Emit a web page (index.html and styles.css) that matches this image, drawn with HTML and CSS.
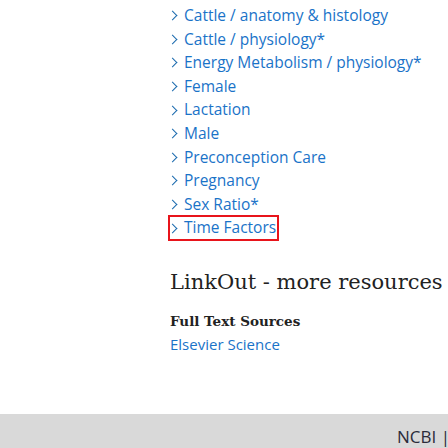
FILE: index.html
```html
<!DOCTYPE html>
<html>
<head>
<meta charset="utf-8">
<link rel="stylesheet" href="styles.css">
</head>
<body>
<div class="page">
  <div class="content">
    <ul class="terms">
      <li><a href="#">Cattle / anatomy &amp; histology</a></li>
      <li><a href="#">Cattle / physiology*</a></li>
      <li><a href="#">Energy Metabolism / physiology*</a></li>
      <li><a href="#">Female</a></li>
      <li><a href="#">Lactation</a></li>
      <li><a href="#">Male</a></li>
      <li><a href="#">Preconception Care</a></li>
      <li><a href="#">Pregnancy</a></li>
      <li><a href="#">Sex Ratio*</a></li>
      <li class="focused"><a href="#">Time Factors</a></li>
    </ul>
    <h2 class="linkout">LinkOut - more resources</h2>
    <h3 class="sub">Full Text Sources</h3>
    <a class="source" href="#">Elsevier Science</a>
  </div>
  <footer class="footer">
    <span class="ncbi">NCBI |</span>
  </footer>
</div>
</body>
</html>
```
FILE: styles.css
```css
html, body {
  margin: 0;
  padding: 0;
  background: #fff;
  overflow: hidden;
}
.page {
  width: 448px;
  height: 448px;
  display: flex;
  flex-direction: column;
}
.content {
  flex: 1;
  padding: 4px 0 0 170px;
}
.terms {
  list-style: none;
  margin: 0;
  padding: 0;
  font-family: "Open Sans", "Noto Sans", sans-serif;
  font-size: 15.5px;
  line-height: 23.6px;
}
.terms li {
  display: flex;
  align-items: center;
  width: fit-content;
  padding-right: 2px;
}
.terms li::before {
  content: "";
  width: 6px;
  height: 6px;
  border-right: 1.6px solid #1a6aae;
  border-top: 1.6px solid #1a6aae;
  transform: rotate(45deg);
  margin: 0 8px 0 -1px;
}
.terms a {
  color: #1a73c8;
  text-decoration: none;
}
.terms li.focused {
  outline: 2px solid #e8141b;
  outline-offset: -1px;
  margin-left: -1px;
  padding-left: 1px;
}
.linkout {
  font-family: "DejaVu Serif", serif;
  font-weight: normal;
  font-size: 21px;
  color: #222;
  margin: 29px 0 0 0;
  line-height: 26px;
  white-space: nowrap;
}
.sub {
  font-family: "DejaVu Serif", serif;
  font-weight: bold;
  font-size: 13.5px;
  color: #222;
  margin: 16px 0 0 0;
  line-height: 20px;
}
.source {
  display: block;
  font-family: "Open Sans", "Noto Sans", sans-serif;
  font-size: 15px;
  color: #1a73c8;
  text-decoration: none;
  margin-top: 3px;
  line-height: 20px;
}
.footer {
  height: 34px;
  background: #d9d9d9;
  display: flex;
  justify-content: flex-end;
  align-items: flex-end;
  overflow: hidden;
}
.ncbi {
  font-family: "Open Sans", "Noto Sans", sans-serif;
  font-size: 17px;
  color: #2b2b3a;
  margin-right: -2px;
  line-height: 22px;
  white-space: nowrap;
}
```
